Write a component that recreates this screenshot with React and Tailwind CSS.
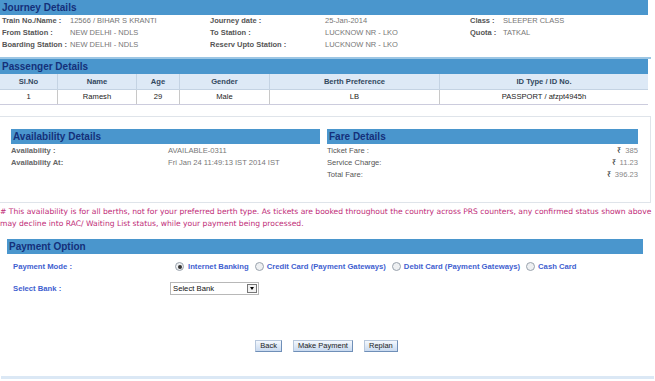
import React from 'react';

// --- datos del pasajero / tarifa ---
const journey = [
  ['Train No./Name :', '12566 / BIHAR S KRANTI', 'Journey date :', '25-Jan-2014', 'Class :', 'SLEEPER CLASS'],
  ['From Station :', 'NEW DELHI - NDLS', 'To Station :', 'LUCKNOW NR - LKO', 'Quota :', 'TATKAL'],
  ['Boarding Station :', 'NEW DELHI - NDLS', 'Reserv Upto Station :', 'LUCKNOW NR - LKO', '', ''],
];

const cols = [
  { h: 'Sl.No', v: '1', w: 'w-[58px]' },
  { h: 'Name', v: 'Ramesh', w: 'w-[79px]' },
  { h: 'Age', v: '29', w: 'w-[43px]' },
  { h: 'Gender', v: 'Male', w: 'w-[90px]' },
  { h: 'Berth Preference', v: 'LB', w: 'w-[170px]' },
  { h: 'ID Type / ID No.', v: 'PASSPORT / afzpt4945h', w: 'flex-1' },
];

const fares = [
  ['Ticket Fare :', '385'],
  ['Service Charge:', '11.23'],
  ['Total Fare:', '396.23'],
];

const Header = ({ children, className = '' }) => (
  <div className={`bg-[#4a96cd] h-[15px] flex items-center pl-[2px] text-[10px] font-bold text-[#14307a] whitespace-nowrap ${className}`}>
    {children}
  </div>
);

const Radio = ({ checked }) => (
  <span className="w-[9px] h-[9px] rounded-full border border-[#9aa3ad] bg-[#eef0f2] flex items-center justify-center">
    {checked && <span className="w-[4px] h-[4px] rounded-full bg-[#333]" />}
  </span>
);

const Btn = ({ children }) => (
  <button className="h-[12px] px-[4px] text-[7.5px] text-[#222] bg-gradient-to-b from-[#f4f8fd] to-[#c9daf0] border border-[#b7c7dc] border-r-[#6f8fb8] border-b-[#6f8fb8] leading-none">
    {children}
  </button>
);

export default function App() {
  return (
    <div className="w-[655px] h-[381px] bg-white overflow-hidden font-['Liberation_Sans',Arial,sans-serif]">
      {/* Journey Details */}
      <Header className="mr-[7px]">Journey Details</Header>
      <div className="pb-[6px] border-b-2 border-[#9cc6e4] mr-[4px]">
        {journey.map((r, i) => (
          <div key={i} className="flex h-[12px] items-center text-[7.5px] whitespace-nowrap">
            <span className="w-[70px] pl-[2px] font-bold text-[#555]">{r[0]}</span>
            <span className="w-[140px] text-[#777]">{r[1]}</span>
            <span className="w-[115px] font-bold text-[#555]">{r[2]}</span>
            <span className="w-[145px] text-[#777]">{r[3]}</span>
            <span className="w-[33px] font-bold text-[#555]">{r[4]}</span>
            <span className="text-[#777]">{r[5]}</span>
          </div>
        ))}
      </div>

      {/* Passenger Details */}
      <Header className="mr-[7px]">Passenger Details</Header>
      <div className="mr-[7px] text-[7.6px]">
        <div className="flex h-[16px] bg-[#dde9f6] border-b border-[#c4d3e3]">
          {cols.map((c) => (
            <div key={c.h} className={`${c.w} flex items-center justify-center font-bold text-[#33495f] border-r border-[#c4d3e3] last:border-r-0`}>{c.h}</div>
          ))}
        </div>
        <div className="flex h-[15px] border-b border-[#ccd]">
          {cols.map((c) => (
            <div key={c.h} className={`${c.w} flex items-center justify-center text-[#222] border-r border-[#c8c8c8] last:border-r-0`}>{c.v}</div>
          ))}
        </div>
      </div>

      {/* Availability + Fare */}
      <div className="mt-[11px] mr-[4px] border-t border-r border-b border-[#dfe4ea] h-[87px] flex pt-[12px] pl-[11px] pr-[10px] gap-[7px]">
        <div className="w-[309px]">
          <Header>Availability Details</Header>
          <div className="text-[7.6px] pt-[1px]">
            <div className="flex h-[12px] items-center">
              <span className="w-[157px] font-bold text-[#666]">Availability :</span>
              <span className="text-[#777]">AVAILABLE-0311</span>
            </div>
            <div className="flex h-[12px] items-center">
              <span className="w-[157px] font-bold text-[#666]">Availability At:</span>
              <span className="text-[#777]">Fri Jan 24 11:49:13 IST 2014 IST</span>
            </div>
          </div>
        </div>
        <div className="w-[311px]">
          <Header>Fare Details</Header>
          <div className="text-[7.6px] pt-[1px]">
            {fares.map((f) => (
              <div key={f[0]} className="flex h-[12px] items-center justify-between">
                <span className="text-[#555]">{f[0]}</span>
                <span className="text-[#888]"><span className="text-[#222] mr-[4px]">₹</span>{f[1]}</span>
              </div>
            ))}
          </div>
        </div>
      </div>

      {/* Warning */}
      <p className="mt-[3px] text-[7.6px] leading-[12px] text-[#c02c78] font-['DejaVu_Sans',Verdana,sans-serif] whitespace-nowrap">
        # This availability is for all berths, not for your preferred berth type. As tickets are booked throughout the country across PRS counters, any confirmed status shown above<br />
        may decline into RAC/ Waiting List status, while your payment being processed.
      </p>

      {/* Payment Option */}
      <div className="mt-[9px] ml-[7px] mr-[12px]">
        <Header>Payment Option</Header>
      </div>
      <div className="pl-[13px] text-[7.7px] font-bold text-[#3f5fd0] whitespace-nowrap">
        <div className="flex items-center h-[12px] mt-[7px]">
          <span className="w-[162px]">Payment Mode :</span>
          <div className="flex items-center">
            <Radio checked /><span className="ml-[4px] mr-[6px]">Internet Banking</span>
            <Radio /><span className="ml-[3px] mr-[6px]">Credit Card (Payment Gateways)</span>
            <Radio /><span className="ml-[3px] mr-[6px]">Debit Card (Payment Gateways)</span>
            <Radio /><span className="ml-[3px]">Cash Card</span>
          </div>
        </div>
        <div className="flex items-center h-[13px] mt-[9px]">
          <span className="w-[157px]">Select Bank :</span>
          <div className="w-[89px] h-[13px] border border-[#b8b8b8] flex items-center justify-between pl-[2px] pr-[1px] font-normal text-[#111]">
            <span>Select Bank</span>
            <span className="w-[10px] h-[9px] border border-[#777] bg-[#f2f2f2] flex items-center justify-center">
              <span className="border-l-[2.5px] border-r-[2.5px] border-t-[3px] border-l-transparent border-r-transparent border-t-black" />
            </span>
          </div>
        </div>
      </div>

      {/* Buttons */}
      <div className="flex justify-center gap-[11px] mt-[45px] pr-[2px]">
        <Btn>Back</Btn>
        <Btn>Make Payment</Btn>
        <Btn>Replan</Btn>
      </div>
      <div className="mt-[24px] h-[3px] bg-[#dbe8f5] mx-[1px]" />
    </div>
  );
}
